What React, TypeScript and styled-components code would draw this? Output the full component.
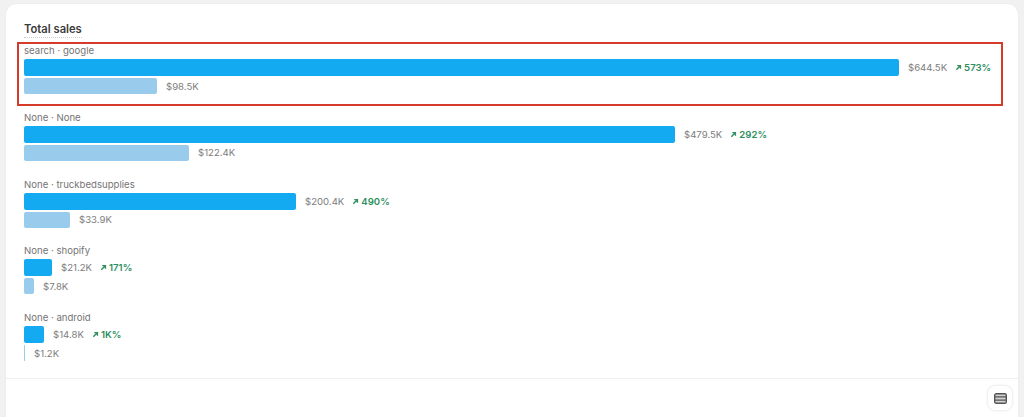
import React from "react";
import styled, { createGlobalStyle } from "styled-components";

const GlobalStyle = createGlobalStyle`
  html, body {
    margin: 0;
    padding: 0;
    background: #f1f1f1;
    font-family: Inter, "Liberation Sans", sans-serif;
  }
`;

const Page = styled.div`
  width: 1024px;
  height: 417px;
  padding: 4px 6px 0;
  box-sizing: border-box;
  overflow: hidden;
`;

const Card = styled.section`
  position: relative;
  height: 413px;
  background: #fff;
  border-radius: 11px 11px 0 0;
  display: flex;
  flex-direction: column;
  box-shadow: 0 0 2px rgba(0, 0, 0, 0.06);
`;

const Body = styled.div`
  height: 375px;
  box-sizing: border-box;
  padding: 18px 18px 0;
  border-bottom: 1px solid #f0f0f0;
`;

const Title = styled.h2`
  margin: 0 0 6px;
  height: 15px;
  width: fit-content;
  font-size: 11.2px;
  line-height: 15px;
  font-weight: 600;
  color: #3a3a3a;
  border-bottom: 1px dotted #cfcfcf;
`;

const Row = styled.div`
  height: 66.75px;
  display: flex;
  flex-direction: column;
`;

const RowLabel = styled.div`
  height: 13px;
  margin-bottom: 2px;
  font-size: 9.6px;
  line-height: 13px;
  color: #747474;
`;

const BarLine = styled.div<{ $previous?: boolean }>`
  height: ${(p) => (p.$previous ? "16px" : "17px")};
  margin-bottom: 2px;
  display: flex;
  align-items: center;
`;

const Bar = styled.div<{ $previous?: boolean }>`
  height: ${(p) => (p.$previous ? "16px" : "17px")};
  background: ${(p) => (p.$previous ? "#98cbec" : "#14aaf2")};
  border-radius: 2px;
`;

const Amount = styled.span`
  margin-left: 9px;
  font-size: 9.6px;
  color: #7d7d7d;
  white-space: nowrap;
`;

const Change = styled.span`
  margin-left: 8px;
  display: inline-flex;
  align-items: center;
  gap: 2px;
  font-size: 9.6px;
  font-weight: 600;
  color: #2f8f5f;
  white-space: nowrap;
`;

const Highlight = styled.div`
  position: absolute;
  left: 11px;
  top: 38px;
  width: 986px;
  height: 64px;
  box-sizing: border-box;
  border: 2px solid #d63a2a;
  pointer-events: none;
`;

const Footer = styled.footer`
  flex: 1;
  display: flex;
  justify-content: flex-end;
  align-items: flex-start;
  padding: 7px 6px 0 0;
`;

const IconButton = styled.button`
  width: 24px;
  height: 24px;
  padding: 0;
  border: none;
  border-radius: 7px;
  background: #fff;
  box-shadow: 0 0 3px rgba(0, 0, 0, 0.16);
  display: flex;
  align-items: center;
  justify-content: center;
`;

const ArrowUpRight = () => (
  <svg width="7" height="7" viewBox="0 0 8 8" fill="none" stroke="#2f8f5f" strokeWidth="1.6">
    <path d="M1.5 6.5L6 2M2.6 1.8H6.2V5.4" />
  </svg>
);

const TableIcon = () => (
  <svg width="13" height="11" viewBox="0 0 13 11" fill="#d2d2d2" stroke="#555" strokeWidth="1.4">
    <rect x="0.7" y="0.7" width="11.6" height="9.6" rx="1.6" />
    <path d="M1 3.9H12M1 7.1H12" />
  </svg>
);

type SalesRow = {
  label: string;
  width: number;
  amount: string;
  change: string;
  previousWidth: number;
  previousAmount: string;
};

const rows: SalesRow[] = [
  { label: "search · google", width: 875, amount: "$644.5K", change: "573%", previousWidth: 133, previousAmount: "$98.5K" },
  { label: "None · None", width: 651, amount: "$479.5K", change: "292%", previousWidth: 165, previousAmount: "$122.4K" },
  { label: "None · truckbedsupplies", width: 272, amount: "$200.4K", change: "490%", previousWidth: 46, previousAmount: "$33.9K" },
  { label: "None · shopify", width: 28, amount: "$21.2K", change: "171%", previousWidth: 10, previousAmount: "$7.8K" },
  { label: "None · android", width: 20, amount: "$14.8K", change: "1K%", previousWidth: 1, previousAmount: "$1.2K" },
];

export default function App() {
  return (
    <>
      <GlobalStyle />
      <Page>
        <Card>
          <Body>
            <Title>Total sales</Title>
            {rows.map((row) => (
              <Row key={row.label}>
                <RowLabel>{row.label}</RowLabel>
                <BarLine>
                  <Bar style={{ width: row.width }} />
                  <Amount>{row.amount}</Amount>
                  <Change>
                    <ArrowUpRight />
                    {row.change}
                  </Change>
                </BarLine>
                <BarLine $previous>
                  <Bar $previous style={{ width: row.previousWidth }} />
                  <Amount>{row.previousAmount}</Amount>
                </BarLine>
              </Row>
            ))}
          </Body>
          <Footer>
            <IconButton aria-label="Table">
              <TableIcon />
            </IconButton>
          </Footer>
          <Highlight />
        </Card>
      </Page>
    </>
  );
}
